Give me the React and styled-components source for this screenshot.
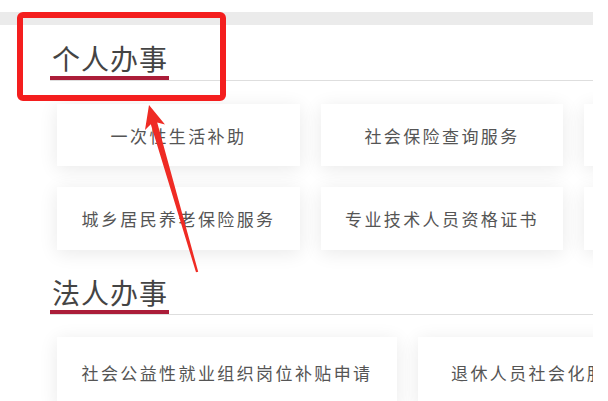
import styled, { createGlobalStyle } from "styled-components";

const GlobalStyle = createGlobalStyle`
  html, body {
    margin: 0;
    padding: 0;
    background: #fff;
  }
  body {
    font-family: "Noto Sans CJK SC", "Noto Sans", sans-serif;
  }
`

const Page = styled.div`
  position: relative;
  width: 593px;
  height: 401px;
  overflow: hidden;
  background: #fff;
`

const TopBar = styled.div`
  margin-top: 12px;
  height: 13px;
  background: #ebebeb;
`

const SectionHead = styled.div`
  display: flex;
  margin-left: 50px;
  margin-top: ${p => p.$top}px;
  border-bottom: 1px solid #dedede;
`

const Title = styled.h2`
  margin: 0;
  padding: 0 1px 0 2px;
  font-size: 28px;
  line-height: 36px;
  font-weight: 400;
  letter-spacing: 1px;
  color: #444;
  border-bottom: 4px solid #ab1d39;
`

const CardRow = styled.div`
  display: flex;
  gap: 21px;
  padding-left: 57px;
  margin-top: ${p => p.$top}px;
`

const Card = styled.div`
  flex: 0 0 ${p => p.$w}px;
  height: ${p => p.$h}px;
  display: flex;
  align-items: center;
  justify-content: ${p => (p.$left ? "flex-start" : "center")};
  padding-left: ${p => (p.$left ? 33 : 0)}px;
  box-sizing: border-box;
  background: #fff;
  box-shadow: 0 3px 18px rgba(0, 0, 0, 0.09);
  font-size: 17px;
  letter-spacing: 2.4px;
  color: #555;
  white-space: nowrap;
  overflow: hidden;
`

// 标注框
const MarkBox = styled.div`
  position: absolute;
  left: 17px;
  top: 12px;
  width: 209px;
  height: 89px;
  box-sizing: border-box;
  border: 6px solid #f41e1e;
  border-radius: 6px;
`

const ArrowSvg = styled.svg`
  position: absolute;
  left: 0;
  top: 0;
`

const Arrow = () => (
  <ArrowSvg width="608" height="401" viewBox="0 0 608 401">
    <polygon
      fill="#ef2b24"
      points="149,105 165,124.5 157.2,122.6 198.2,271.8 196,272.3 150.8,124.2 145,130"
    />
  </ArrowSvg>
)

const App = () => {
  return (
    <>
      <GlobalStyle />
      <Page>
        <TopBar />
        <SectionHead $top={15}>
          <Title>个人办事</Title>
        </SectionHead>
        <CardRow $top={23}>
          <Card $w={243} $h={62}>一次性生活补助</Card>
          <Card $w={242} $h={62}>社会保险查询服务</Card>
          <Card $w={242} $h={62} />
        </CardRow>
        <CardRow $top={21}>
          <Card $w={243} $h={63}>城乡居民养老保险服务</Card>
          <Card $w={242} $h={63}>专业技术人员资格证书</Card>
          <Card $w={242} $h={63} />
        </CardRow>
        <SectionHead $top={24}>
          <Title>法人办事</Title>
        </SectionHead>
        <CardRow $top={22}>
          <Card $w={340} $h={70}>社会公益性就业组织岗位补贴申请</Card>
          <Card $w={340} $h={70} $left>退休人员社会化服务</Card>
        </CardRow>
        <MarkBox />
        <Arrow />
      </Page>
    </>
  );
}

export default App;
